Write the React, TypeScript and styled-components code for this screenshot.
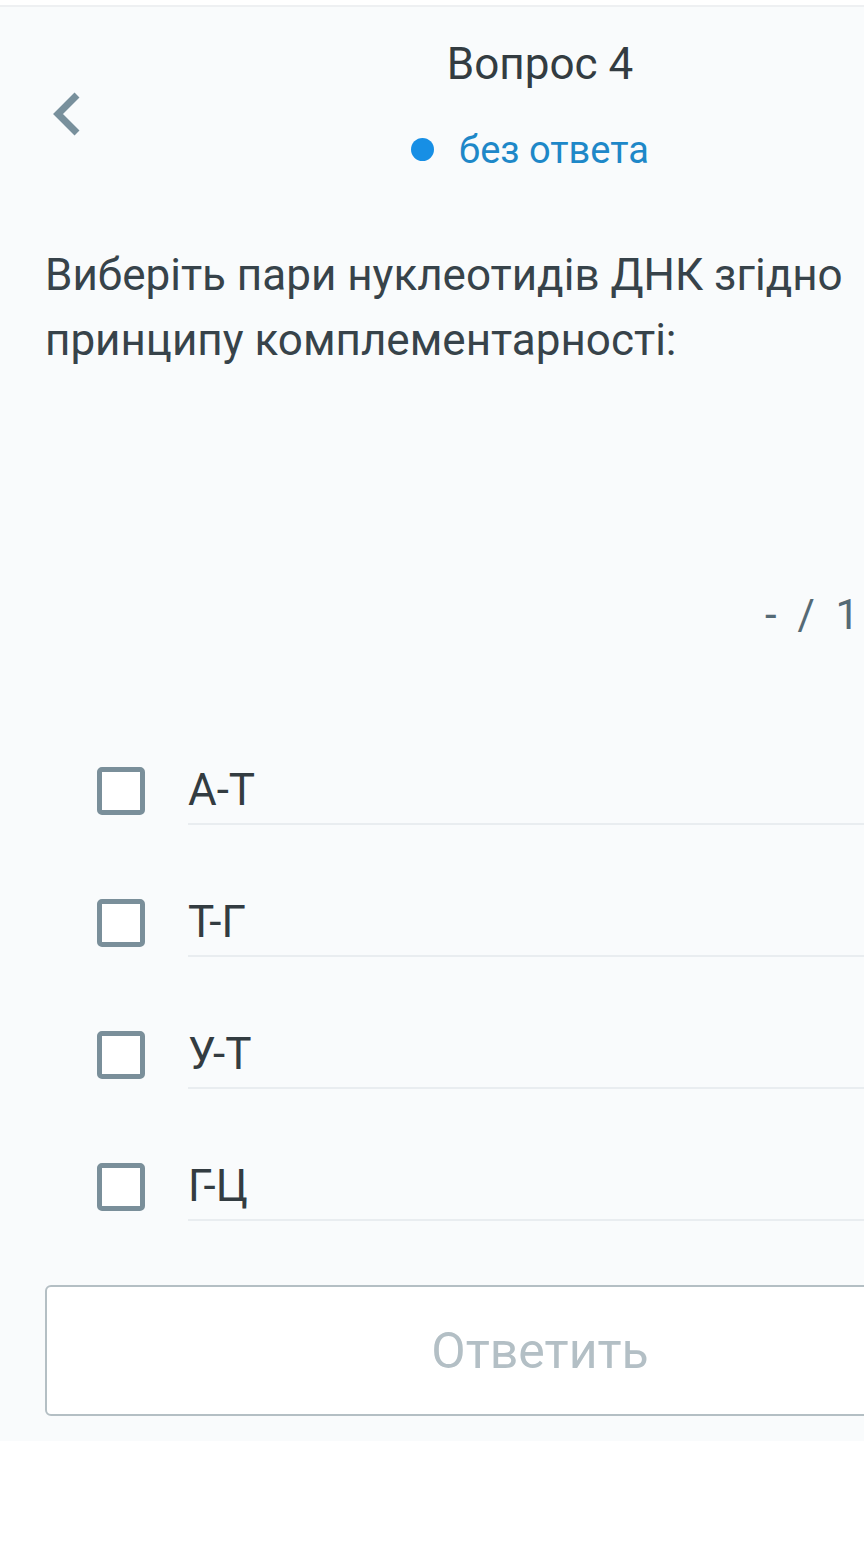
import styled, { createGlobalStyle } from "styled-components";

const GlobalStyle = createGlobalStyle`
  html, body {
    margin: 0;
    padding: 0;
    background: #ffffff;
    overflow: hidden;
  }
  body {
    font-family: Roboto, "Noto Sans", sans-serif;
  }
`;

const Screen = styled.div`
  width: 1080px;
  background: #f9fbfc;
  border-top: 5px solid #ffffff;
  padding-bottom: 25px;
`;

const TopLine = styled.div`
  height: 2px;
  background: #eef0f2;
`;

const Header = styled.header`
  display: grid;
  grid-template-columns: 140px 1fr 140px;
  align-items: center;
  height: 200px;
  padding: 0 45px;
`;

const BackButton = styled.button`
  width: 60px;
  height: 60px;
  margin-top: 16px;
  padding: 0 0 0 4px;
  border: none;
  background: none;
  display: flex;
  align-items: center;
  cursor: pointer;
`;

const HeaderCenter = styled.div`
  display: flex;
  flex-direction: column;
  align-items: center;
  gap: 34px;
  margin-top: -5px;
`;

const Title = styled.h1`
  margin: 0;
  font-size: 44px;
  font-weight: 400;
  line-height: 56px;
  color: #333c41;
`;

const Status = styled.div`
  display: flex;
  align-items: center;
  gap: 25px;
  padding-right: 20px;
  font-size: 38px;
  line-height: 48px;
  color: #1e88c8;
`;

const Dot = styled.span`
  width: 23px;
  height: 23px;
  border-radius: 50%;
  background: #178fe5;
`;

const Question = styled.p`
  margin: 36px 45px 0;
  font-size: 44px;
  line-height: 65px;
  color: #37434a;
`;

const ScoreRow = styled.div`
  display: flex;
  justify-content: flex-start;
  padding-left: 765px;
  margin-top: 217px;
  font-size: 42px;
  line-height: 50px;
  color: #556a75;
  white-space: pre;
`;

const OptionList = styled.div`
  display: flex;
  flex-direction: column;
  gap: 64px;
  padding-left: 97px;
  margin-top: 117px;
`;

const Option = styled.label`
  display: flex;
  align-items: center;
  gap: 43px;
  cursor: pointer;
`;

const Box = styled.span`
  flex: none;
  width: 48px;
  height: 48px;
  box-sizing: border-box;
  border: 5px solid #7a8f9a;
  border-radius: 5px;
  background: #ffffff;
`;

const OptionText = styled.span`
  flex: 1;
  padding: 7px 0;
  font-size: 44px;
  line-height: 52px;
  color: #333c41;
  border-bottom: 2px solid #e9edf0;
`;

const SubmitButton = styled.button`
  display: block;
  box-sizing: border-box;
  width: 990px;
  height: 131px;
  margin: 64px 45px 0;
  padding: 0;
  border: 2px solid #b4bfc4;
  border-radius: 6px;
  background: #ffffff;
  font-family: Roboto, "Noto Sans", sans-serif;
  font-size: 50px;
  color: #b3bfc5;
`;

const options = ["А-Т", "Т-Г", "У-Т", "Г-Ц"];

function App() {
  return (
    <>
      <GlobalStyle />
      <Screen>
        <TopLine />
        <Header>
          <BackButton aria-label="Назад">
            <svg width="34" height="48" viewBox="0 0 34 48">
              <path
                d="M28 4 L9 23 L28 42"
                fill="none"
                stroke="#78909c"
                strokeWidth="7"
              />
            </svg>
          </BackButton>
          <HeaderCenter>
            <Title>Вопрос 4</Title>
            <Status>
              <Dot />
              без ответа
            </Status>
          </HeaderCenter>
          <span />
        </Header>
        <Question>
          Виберіть пари нуклеотидів ДНК згідно принципу комплементарності:
        </Question>
        <ScoreRow>-  /  1</ScoreRow>
        <OptionList>
          {options.map((o) => (
            <Option key={o}>
              <Box />
              <OptionText>{o}</OptionText>
            </Option>
          ))}
        </OptionList>
        <SubmitButton>Ответить</SubmitButton>
      </Screen>
    </>
  );
}

export default App;
